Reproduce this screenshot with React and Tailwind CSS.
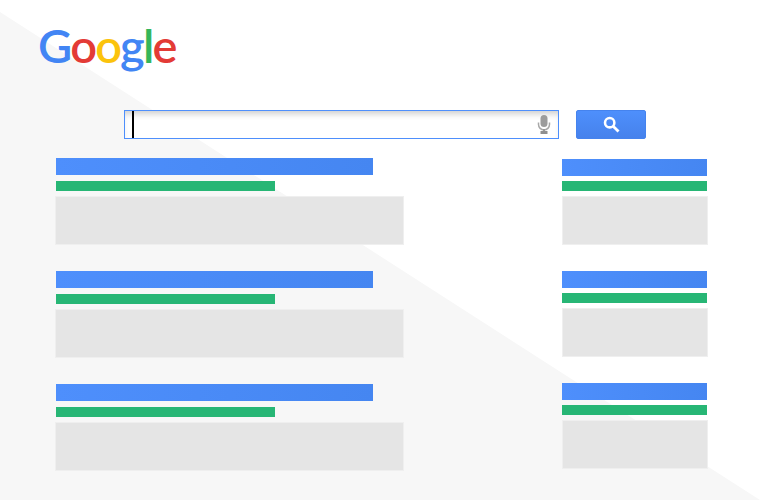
const Result = ({ blue, green, grey, gap1 }) => (
  <div className="flex flex-col">
    <div className={`h-[17px] bg-linear-to-r from-[#4e8ffc] to-[#4586f1] ${blue}`}></div>
    <div className={`h-[10px] bg-[#27b675] ${green} ${gap1}`}></div>
    <div className={`h-[49px] mt-[5px] bg-[#e5e5e5] border border-[#efefef] ${grey}`}></div>
  </div>
);

const LeftResult = () => (
  <Result blue="w-[317px] ml-px" green="w-[219px] ml-px" grey="w-[349px]" gap1="mt-[6px]" />
);

const RightResult = () => (
  <Result blue="w-[145px]" green="w-[145px]" grey="w-[146px]" gap1="mt-[5px]" />
);

const MicIcon = () => (
  <svg width="14" height="19" viewBox="0 0 14 19">
    <rect x="3.5" y="0" width="7" height="12" rx="3.5" fill="#9c9c9c" />
    <path d="M1.5 7.5v2a5.5 5.5 0 0 0 11 0v-2" fill="none" stroke="#a8a8a8" strokeWidth="1.5" />
    <rect x="6" y="14" width="2" height="2" fill="#999" />
    <rect x="3.5" y="16" width="7" height="3" fill="#8f8f8f" />
  </svg>
);

const SearchIcon = () => (
  <svg width="17" height="17" viewBox="0 0 16 16">
    <circle cx="6.3" cy="6.3" r="4.4" fill="none" stroke="#fff" strokeWidth="2.4" />
    <path d="M9.8 9.8 14.6 14.6" stroke="#fff" strokeWidth="2.6" />
  </svg>
);

export default function App() {
  return (
    <div className="relative w-[760px] h-[500px] overflow-hidden bg-white">
      <div className="absolute inset-0 bg-[#f7f7f7] [clip-path:polygon(0_12px,760px_500px,0_500px)]"></div>

      <div className="relative flex flex-col h-full">
        <div className="h-[110px] pl-[38px] pt-[15px]">
          <div className="text-[47px] leading-[60px] tracking-[-1.8px] font-semibold font-['Lato','Liberation_Sans',sans-serif]">
            <span className="text-[#4285f4]">G</span>
            <span className="text-[#e33b36]">o</span>
            <span className="text-[#fbc30c]">o</span>
            <span className="text-[#4285f4]">g</span>
            <span className="text-[#34b65a]">l</span>
            <span className="text-[#e33b36]">e</span>
          </div>
        </div>

        <div className="flex pl-[124px]">
          <div className="relative w-[435px] h-[29px] border border-[#4e8ffc] bg-white flex items-center justify-end pr-[7px] shadow-[inset_0_6px_6px_-3px_#cfcfcf]">
            <div className="absolute left-[7px] top-0 bottom-0 w-[2px] bg-black"></div>
            <MicIcon />
          </div>
          <button className="ml-[17px] w-[70px] h-[29px] rounded-[2px] bg-linear-to-b from-[#4e8ffc] to-[#4682ec] border border-[#4583ee] flex items-center justify-center">
            <SearchIcon />
          </button>
        </div>

        <div className="flex pl-[55px] pt-[19px]">
          <div className="flex flex-col gap-[26px] w-[507px]">
            <LeftResult />
            <LeftResult />
            <LeftResult />
          </div>
          <div className="flex flex-col gap-[26px] pt-px">
            <RightResult />
            <RightResult />
            <RightResult />
          </div>
        </div>
      </div>
    </div>
  );
}
